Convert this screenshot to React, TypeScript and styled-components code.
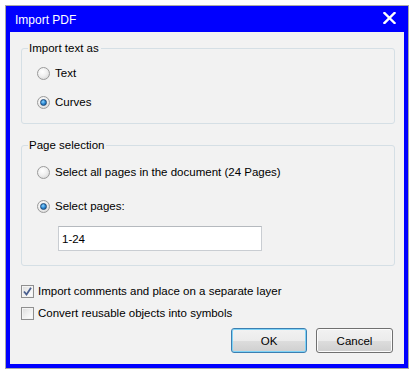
import styled, { createGlobalStyle } from 'styled-components';

const GlobalStyle = createGlobalStyle`
  html, body {
    margin: 0;
    padding: 0;
    background: #ffffff;
  }
  body {
    font-family: 'Liberation Sans', Arial, sans-serif;
    font-size: 11.5px;
    color: #000000;
  }
`;

const Page = styled.div`
  padding: 5px;
`;

const Window = styled.div`
  width: 404px;
  border: 1px solid #a9a9a9;
  background: #0000ff;
  padding: 0 4px 4px 4px;
  box-sizing: border-box;
`;

const TitleBar = styled.div`
  display: flex;
  align-items: center;
  justify-content: space-between;
  height: 26px;
  padding: 0 8px 0 5px;
  color: #ffffff;
  font-size: 12px;
`;

const Title = styled.span`
  padding-top: 1px;
`;

const CloseButton = styled.svg`
  width: 13px;
  height: 12px;
  margin-top: -2px;
`;

const Body = styled.div`
  background: #f2f2f2;
  padding: 8px 9px 11px 11px;
  display: flex;
  flex-direction: column;
`;

const Group = styled.fieldset<{ $gap?: number }>`
  margin: 0 0 ${(p) => p.$gap ?? 0}px 0;
  padding: 0 12px 0 15px;
  border: 1px solid #d5dfe5;
  border-radius: 3px;
  min-width: 0;
`;

const Legend = styled.legend`
  padding: 0 2px 0 1px;
  margin-left: -9px;
  line-height: 16px;
  font-size: 11.5px;
`;

const GroupContent = styled.div<{ $top: number; $bottom: number }>`
  display: flex;
  flex-direction: column;
  align-items: flex-start;
  padding-top: ${(p) => p.$top}px;
  padding-bottom: ${(p) => p.$bottom}px;
`;

const OptionRow = styled.label<{ $mb?: number }>`
  display: flex;
  align-items: center;
  height: 20px;
  gap: 5px;
  margin-bottom: ${(p) => p.$mb ?? 0}px;
`;

const RadioDot = styled.span<{ $checked?: boolean }>`
  position: relative;
  width: 13px;
  height: 13px;
  box-sizing: border-box;
  border-radius: 50%;
  border: 1px solid #9a9a9a;
  background: radial-gradient(circle at 40% 35%, #ffffff 0%, #f0f0f0 45%, #cfcfcf 100%);
  flex-shrink: 0;

  &::after {
    content: '';
    display: ${(p) => (p.$checked ? 'block' : 'none')};
    position: absolute;
    left: 2px;
    top: 2px;
    width: 7px;
    height: 7px;
    box-sizing: border-box;
    border-radius: 50%;
    border: 1px solid #1f4a78;
    background: radial-gradient(circle at 40% 35%, #8fd4ff 0%, #2d8ad4 50%, #0c4f8f 100%);
  }
`;

const PageInput = styled.input`
  margin: 0 0 0 21px;
  width: 204px;
  height: 25px;
  box-sizing: border-box;
  border: 1px solid #c9cdd2;
  border-top-color: #b5b9be;
  background: #ffffff;
  padding: 0 3px;
  font-family: 'Liberation Sans', Arial, sans-serif;
  font-size: 11.5px;
  color: #000000;
  outline: none;
`;

const CheckList = styled.div`
  display: flex;
  flex-direction: column;
  gap: 6px;
  margin-top: 17px;
`;

const CheckRow = styled.label`
  display: flex;
  align-items: center;
  gap: 4px;
  height: 16px;
`;

const CheckBox = styled.span`
  display: flex;
  align-items: center;
  justify-content: center;
  width: 13px;
  height: 13px;
  box-sizing: border-box;
  border: 1px solid #8f8f8f;
  background: linear-gradient(135deg, #dcdcdc 0%, #f4f4f4 60%, #ffffff 100%);
  box-shadow: inset 0 0 0 1px #f4f4f4;
  flex-shrink: 0;
`;

const ButtonRow = styled.div`
  display: flex;
  justify-content: flex-end;
  gap: 9px;
  margin-top: 7px;
  padding-right: 2px;
`;

const Button = styled.button<{ $default?: boolean; $w: number }>`
  width: ${(p) => p.$w}px;
  height: 25px;
  box-sizing: border-box;
  border-radius: 3px;
  border: 1px solid ${(p) => (p.$default ? '#3c7fb1' : '#707070')};
  background: linear-gradient(#f2f2f2 0%, #ebebeb 50%, #dddddd 51%, #cfcfcf 100%);
  box-shadow: inset 0 0 0 1px ${(p) => (p.$default ? '#7fd3f7' : '#fcfcfc')};
  font-family: 'Liberation Sans', Arial, sans-serif;
  font-size: 11.5px;
  color: #000000;
  padding: 0;
`;

export default function App() {
  return (
    <>
      <GlobalStyle />
      <Page>
        <Window>
          <TitleBar>
            <Title>Import PDF</Title>
            <CloseButton viewBox="0 0 13 12">
              <path d="M1.5 1 L11.5 11 M11.5 1 L1.5 11" stroke="#ffffff" strokeWidth="2.4" strokeLinecap="square" />
            </CloseButton>
          </TitleBar>
          <Body>
            <Group $gap={13}>
              <Legend>Import text as</Legend>
              <GroupContent $top={7} $bottom={11}>
                <OptionRow $mb={9}>
                  <RadioDot />
                  Text
                </OptionRow>
                <OptionRow>
                  <RadioDot $checked />
                  Curves
                </OptionRow>
              </GroupContent>
            </Group>
            <Group>
              <Legend>Page selection</Legend>
              <GroupContent $top={9} $bottom={14}>
                <OptionRow $mb={14}>
                  <RadioDot />
                  Select all pages in the document (24 Pages)
                </OptionRow>
                <OptionRow $mb={10}>
                  <RadioDot $checked />
                  Select pages:
                </OptionRow>
                <PageInput defaultValue="1-24" />
              </GroupContent>
            </Group>
            <CheckList>
              <CheckRow>
                <CheckBox>
                  <svg width="9" height="9" viewBox="0 0 9 9">
                    <path d="M1 4.5 L3.5 7.5 L8 0.8" stroke="#4a5f8f" strokeWidth="1.8" fill="none" />
                  </svg>
                </CheckBox>
                Import comments and place on a separate layer
              </CheckRow>
              <CheckRow>
                <CheckBox />
                Convert reusable objects into symbols
              </CheckRow>
            </CheckList>
            <ButtonRow>
              <Button $default $w={76}>OK</Button>
              <Button $w={77}>Cancel</Button>
            </ButtonRow>
          </Body>
        </Window>
      </Page>
    </>
  );
}
